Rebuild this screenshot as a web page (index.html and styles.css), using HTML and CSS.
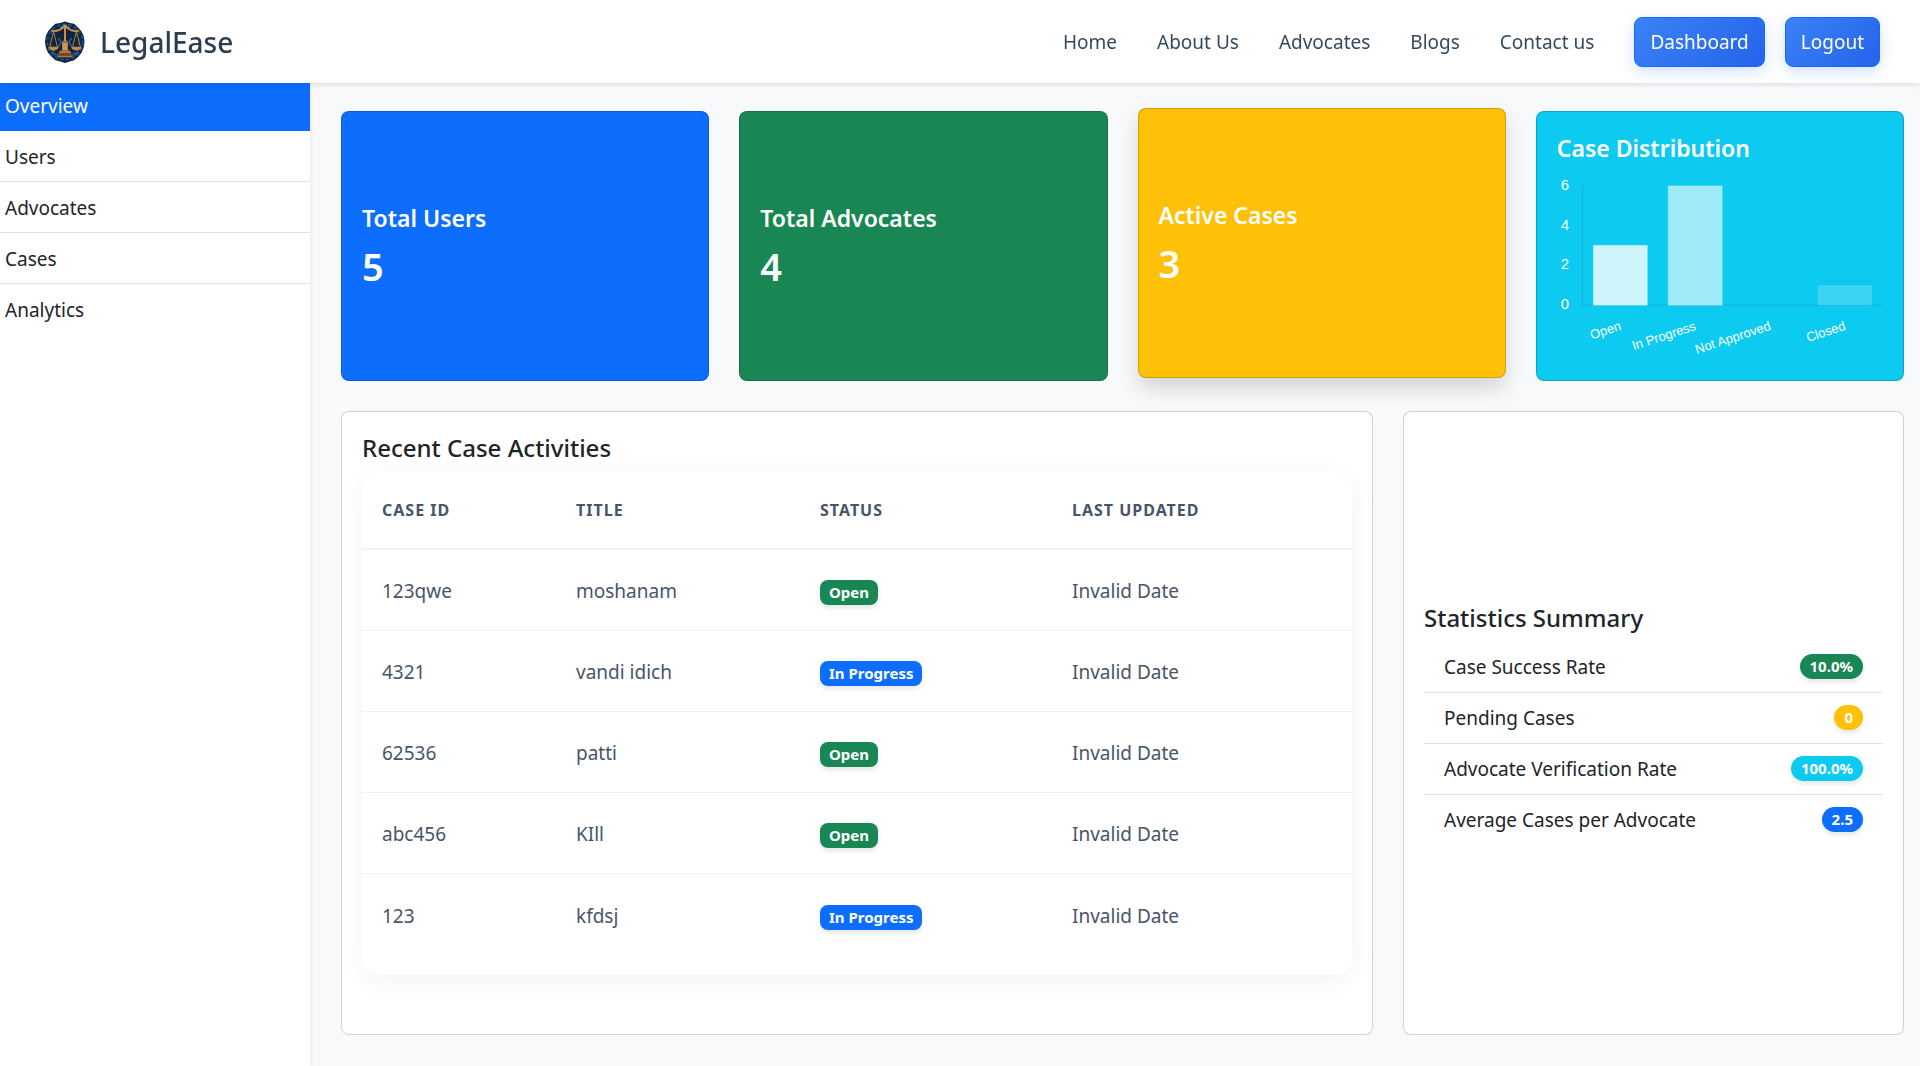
FILE: index.html
```html
<!DOCTYPE html>
<html lang="en">
<head>
<meta charset="utf-8">
<meta name="viewport" content="width=device-width, initial-scale=1">
<title>LegalEase</title>
<link rel="stylesheet" href="styles.css">
</head>
<body>
<header class="topbar">
  <a class="brand" href="#">
    <svg class="brand-logo" viewBox="0 0 44 44" aria-hidden="true">
      <path d="M22 0.500l5 1.500 4.500 1 4 3.500 3.500 4 2.500 5 1 6.500-1 6-2 5-3.500 4.500-4.500 3.500-4.500 1.500-5 1.500-5-1.500-5-1.500-4-3.500-4-4.500-2-5-1-6 1-6.500 2.500-5 3.500-4 4-3.500 5-1z" fill="#10233f"/>
      <circle cx="22" cy="22" r="18.500" fill="none" stroke="#14538a" stroke-width="2" stroke-dasharray="4 2"/>
      <circle cx="22" cy="22" r="15" fill="none" stroke="#1a4470" stroke-width="2" stroke-dasharray="3 3"/>
      <path d="M15 18l3 4-3 5M29 18l-3 4 3 5M17 8l2-3M27 8l-2-3M8 32l5 4M36 32l-5 4" stroke="#1c69a4" stroke-width="1.500" fill="none"/>
      <path d="M7.500 10q7 2 12.500-3.500h4q5.500 5.500 12.500 3.500" fill="none" stroke="#c98c48" stroke-width="2"/>
      <path d="M10 11L6 27M10 11l4 16M34 11l-4 16M34 11l4 16" stroke="#b87e42" stroke-width="1"/>
      <path d="M4.500 27h11q-1 4-5.500 4t-5.500-4zM28.500 27h11q-1 4-5.500 4t-5.500-4z" fill="#d0863c"/>
      <path d="M20 4h4l-1 4v12l2 2v9h-6v-9l2-2V8z" fill="#cf9450"/>
      <path d="M17 31h10l2 3h-14zM14 35h16v3H14z" fill="#b97638"/>
      <path d="M19 22h6M14 36h16" stroke="#6b4127" stroke-width="1"/>
    </svg>
    <span>LegalEase</span>
  </a>
  <nav class="nav" aria-label="Main">
    <a href="#">Home</a>
    <a href="#">About Us</a>
    <a href="#">Advocates</a>
    <a href="#">Blogs</a>
    <a href="#">Contact us</a>
    <div class="actions">
      <button class="btn" type="button">Dashboard</button>
      <button class="btn" type="button">Logout</button>
    </div>
  </nav>
</header>

<div class="layout">
  <nav class="sidebar" aria-label="Dashboard sections">
    <a class="active" href="#">Overview</a>
    <a href="#">Users</a>
    <a href="#">Advocates</a>
    <a href="#">Cases</a>
    <a href="#">Analytics</a>
  </nav>

  <main class="content">
    <section class="card stat blue"><h2>Total Users</h2><p>5</p></section>
    <section class="card stat green"><h2>Total Advocates</h2><p>4</p></section>
    <section class="card stat yellow raised"><h2>Active Cases</h2><p>3</p></section>
    <section class="card cyan">
      <h2>Case Distribution</h2>
      <svg class="chart" viewBox="0 0 327 186" role="img" aria-label="Cases by status">
        <g class="ticks">
          <text x="8" y="14">6</text>
          <text x="8" y="54">4</text>
          <text x="8" y="93">2</text>
          <text x="8" y="133">0</text>
        </g>
        <path d="M25.500 9v120.500H326" class="axis"/>
        <g class="bars">
          <rect x="36.500" y="69.500" width="54" height="60" fill-opacity="0.800"/>
          <rect x="111.500" y="10" width="54" height="119.500" fill-opacity="0.600"/>
          <rect x="261.500" y="109.500" width="54" height="20" fill-opacity="0.200" stroke-opacity="0.060"/>
        </g>
        <g class="labels">
          <text transform="translate(65 154) rotate(-18)">Open</text>
          <text transform="translate(140 154) rotate(-18)">In Progress</text>
          <text transform="translate(215 154) rotate(-18)">Not Approved</text>
          <text transform="translate(290 154) rotate(-18)">Closed</text>
        </g>
      </svg>
    </section>

    <section class="card wide">
      <h2>Recent Case Activities</h2>
      <div class="table-box">
        <table>
          <thead>
            <tr><th class="c-id">Case ID</th><th class="c-title">Title</th><th class="c-status">Status</th><th>Last Updated</th></tr>
          </thead>
          <tbody>
            <tr><td>123qwe</td><td>moshanam</td><td><span class="badge green">Open</span></td><td>Invalid Date</td></tr>
            <tr><td>4321</td><td>vandi idich</td><td><span class="badge blue">In Progress</span></td><td>Invalid Date</td></tr>
            <tr><td>62536</td><td>patti</td><td><span class="badge green">Open</span></td><td>Invalid Date</td></tr>
            <tr><td>abc456</td><td>KIll</td><td><span class="badge green">Open</span></td><td>Invalid Date</td></tr>
            <tr><td>123</td><td>kfdsj</td><td><span class="badge blue">In Progress</span></td><td>Invalid Date</td></tr>
          </tbody>
        </table>
      </div>
    </section>

    <section class="card narrow">
      <h2>Statistics Summary</h2>
      <ul class="summary">
        <li>Case Success Rate <span class="badge pill green">10.0%</span></li>
        <li>Pending Cases <span class="badge pill yellow">0</span></li>
        <li>Advocate Verification Rate <span class="badge pill cyan">100.0%</span></li>
        <li>Average Cases per Advocate <span class="badge pill blue">2.5</span></li>
      </ul>
    </section>
  </main>
</div>
</body>
</html>
```
FILE: styles.css
```css
* { box-sizing: border-box; }

body {
  margin: 0;
  padding-top: 80px;
  min-height: 100vh;
  display: flex;
  flex-direction: column;
  background: #f8f9fb;
  color: #212529;
  font: 19px/30px "Noto Sans", "Open Sans", sans-serif;
}

a { color: inherit; text-decoration: none; }
h2, p, ul { margin: 0; }

.topbar {
  position: fixed;
  inset: 0 0 auto 0;
  z-index: 10;
  height: 83px;
  padding: 0 40px 0 44px;
  display: flex;
  align-items: center;
  justify-content: space-between;
  background: #fff;
  box-shadow: 0 2px 5px rgba(0, 0, 0, 0.1);
}
.brand {
  display: flex;
  align-items: center;
  gap: 14px;
  color: #2c3e50;
  font-size: 28px;
  font-weight: 500;
}
.brand-logo { width: 42px; height: 44px; }
.nav { display: flex; align-items: center; gap: 40px; color: #34495e; }
.actions { display: flex; gap: 20px; }
.btn {
  height: 50px;
  padding: 0 15px;
  border: 1px solid #0d6efd;
  border-radius: 8px;
  background: linear-gradient(135deg, #3b82f6, #2563eb);
  box-shadow: 0 5px 15px rgba(37, 99, 235, 0.2);
  color: #fff;
  font: inherit;
}

.layout { flex: 1; display: flex; }
.sidebar {
  flex: 0 0 310px;
  background: #fff;
  box-shadow: 1px 0 4px rgba(0, 0, 0, 0.06);
}
.sidebar a {
  display: block;
  padding: 11px 5px 9px;
  border-bottom: 1px solid #dee2e6;
}
.sidebar a:last-child { border-bottom: 0; }
.sidebar .active { background: #0d6efd; border-color: #0d6efd; color: #fff; }

.content {
  flex: 1;
  display: grid;
  grid-template-columns: repeat(12, 1fr);
  grid-template-rows: 270px 1fr;
  gap: 30px;
  padding: 31px 16px 31px 31px;
}
.card {
  grid-column: span 3;
  padding: 20px;
  border: 1px solid rgba(0, 0, 0, 0.176);
  border-radius: 8px;
  background-color: #fff;
}
.card h2 { font-size: 24px; font-weight: 500; line-height: 32px; }
.card.wide { grid-column: span 8; }
.card.narrow { grid-column: span 4; display: flex; flex-direction: column; justify-content: center; }
.card.blue, .card.green, .card.yellow, .card.cyan { color: #fff; }
.stat { display: flex; flex-direction: column; justify-content: center; gap: 8px; }
.card.stat h2, .card.cyan h2 { font-size: 23px; font-weight: 600; }
.stat p { font-size: 38px; font-weight: 600; line-height: 48px; }
.raised { transform: translateY(-3px); box-shadow: 0 10px 20px rgba(0, 0, 0, 0.15); }

.blue { background-color: #0d6efd; }
.green { background-color: #198754; }
.yellow { background-color: #ffc107; }
.cyan { background-color: #0dcaf0; }

.chart { display: block; width: 100%; margin-top: 12px; font-family: "Liberation Sans", Arial, sans-serif; }
.chart .ticks { fill: #fff; font-size: 15px; text-anchor: middle; }
.chart .labels { fill: #fff; font-size: 13px; text-anchor: end; }
.chart .axis { fill: none; stroke: rgba(0, 0, 0, 0.12); }
.chart .bars { fill: #fff; stroke: #fff; stroke-opacity: 0.3; }

.table-box {
  margin-top: 8px;
  padding-bottom: 20px;
  border-radius: 16px;
  background: #fff;
  box-shadow: 0 5px 25px rgba(0, 0, 0, 0.05);
}
table { width: 100%; table-layout: fixed; border-collapse: separate; border-spacing: 0; color: #475569; }
th {
  height: 78px;
  padding: 0 20px;
  border-bottom: 2px solid #f0f1f2;
  font-size: 16px;
  font-weight: 700;
  letter-spacing: 1px;
  text-align: left;
  text-transform: uppercase;
}
td { height: 81px; padding: 2px 20px 0; border-bottom: 1px solid #f1f2f3; }
tr:last-child td { border-bottom: 0; }
.c-id { width: 194px; }
.c-title { width: 244px; }
.c-status { width: 252px; }

.badge {
  display: inline-block;
  padding: 0 9px;
  border-radius: 8px;
  box-shadow: 0 3px 5px rgba(0, 0, 0, 0.1);
  color: #fff;
  font-size: 15px;
  font-weight: 700;
  line-height: 25px;
  vertical-align: middle;
}
.pill { padding: 0 10px; border-radius: 13px; }

.summary { padding: 0; list-style: none; margin-top: 8px; }
.summary li {
  display: flex;
  align-items: center;
  justify-content: space-between;
  padding: 10px 20px;
  border-bottom: 1px solid #dee2e6;
}
.summary li:last-child { border-bottom: 0; }
```
